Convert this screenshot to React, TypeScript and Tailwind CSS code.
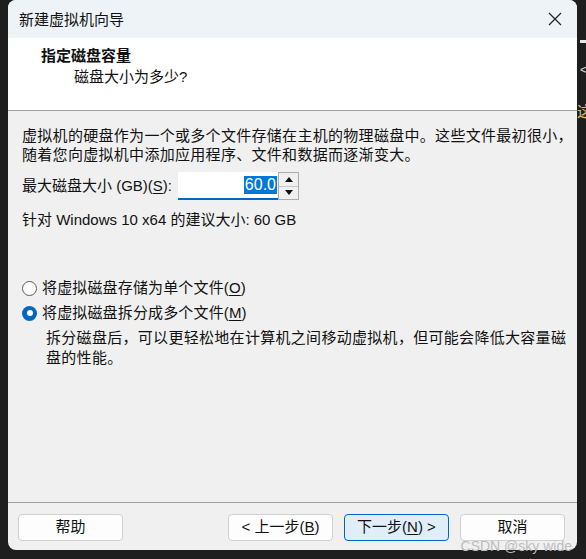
import React from "react";

const font = {
  fontFamily: '"Liberation Sans", "Noto Sans CJK SC", sans-serif',
};

function U({ children }: { children: React.ReactNode }) {
  return <span className="underline underline-offset-2 decoration-1">{children}</span>;
}

function Radio({ checked }: { checked: boolean }) {
  return checked ? (
    <span className="flex h-[15px] w-[15px] shrink-0 items-center justify-center rounded-full bg-[#0067c0]">
      <span className="h-[6px] w-[6px] rounded-full bg-white" />
    </span>
  ) : (
    <span className="h-[15px] w-[15px] shrink-0 rounded-full border border-[#5a5a5a] bg-white" />
  );
}

function Btn({ children, primary }: { children: React.ReactNode; primary?: boolean }) {
  return (
    <div
      className={
        "flex h-[27px] w-[105px] items-center justify-center rounded-[4px] border text-[15px] " +
        (primary ? "border-[#0067c0] bg-[#e0eef9]" : "border-[#d0d0d0] bg-[#fdfdfd]")
      }
    >
      {children}
    </div>
  );
}

export default function App() {
  return (
    <div
      className="relative flex h-[559px] w-[586px] overflow-hidden bg-[#1e1e1e] text-[#111]"
      style={font}
    >
      <div className="w-[8px] shrink-0" />
      <div className="flex h-[550px] w-[569px] shrink-0 flex-col overflow-hidden rounded-[8px] bg-[#f0f0f0]">
        {/* title bar */}
        <div className="flex h-[38px] shrink-0 items-center justify-between bg-[#eef3f8] pl-[11px] pr-[14px]">
          <span className="text-[15px] leading-none">新建虚拟机向导</span>
          <svg width="14" height="14" viewBox="0 0 14 14" className="mr-[1px]">
            <path d="M1 1 L13 13 M13 1 L1 13" stroke="#222" strokeWidth="1.2" />
          </svg>
        </div>
        {/* header */}
        <div className="flex h-[72px] shrink-0 flex-col bg-white pl-[33px] pt-[8px]">
          <div className="text-[15px] font-bold leading-[20px]">指定磁盘容量</div>
          <div className="mt-[1px] pl-[33px] text-[15px] leading-[20px]">磁盘大小为多少?</div>
        </div>
        <div className="h-px shrink-0 bg-[#a0a0a0]" />
        {/* body */}
        <div className="flex flex-1 flex-col pl-[14px] pt-[15px] text-[15px]">
          <div className="leading-[19px] tracking-[0.3px]">
            <div>虚拟机的硬盘作为一个或多个文件存储在主机的物理磁盘中。这些文件最初很小，</div>
            <div>随着您向虚拟机中添加应用程序、文件和数据而逐渐变大。</div>
          </div>
          <div className="mt-[8px] flex h-[28px] items-center">
            <span>
              最大磁盘大小 (GB)(<U>S</U>):
            </span>
            <div className="ml-auto mr-[278px] flex h-[28px]">
              <div className="flex h-[28px] w-[100px] items-center justify-end border-b-2 border-[#0067c0] bg-white pr-[1px]">
                <span className="bg-[#0078d7] px-[1px] text-[16px] leading-[18px] text-white">60.0</span>
              </div>
              <div className="flex h-[28px] w-[21px] flex-col border border-[#adadad] bg-[#e5e5e5]">
                <div className="flex flex-1 items-center justify-center border-b border-[#c8c8c8] bg-[#f0f0f0]">
                  <svg width="8" height="5" viewBox="0 0 8 5">
                    <path d="M0 5 L4 0 L8 5 Z" fill="#111" />
                  </svg>
                </div>
                <div className="flex flex-1 items-center justify-center bg-[#f0f0f0]">
                  <svg width="8" height="5" viewBox="0 0 8 5">
                    <path d="M0 0 L8 0 L4 5 Z" fill="#111" />
                  </svg>
                </div>
              </div>
            </div>
          </div>
          <div className="mt-[10px] leading-[19px]">
            针对 Windows 10 x64 的建议大小: 60 GB
          </div>
          <div className="mt-[49px] flex h-[20px] items-center gap-[5px] pl-[-0px]">
            <Radio checked={false} />
            <span className="tracking-[0.15px]">
              将虚拟磁盘存储为单个文件(<U>O</U>)
            </span>
          </div>
          <div className="mt-[5px] flex h-[20px] items-center gap-[5px]">
            <Radio checked={true} />
            <span className="tracking-[0.15px]">
              将虚拟磁盘拆分成多个文件(<U>M</U>)
            </span>
          </div>
          <div className="mt-[5px] pl-[24px] pr-[8px] leading-[20px] tracking-[0.3px]">
            拆分磁盘后，可以更轻松地在计算机之间移动虚拟机，但可能会降低大容量磁盘的性能。
          </div>
          <div className="flex-1" />
        </div>
        <div className="h-px shrink-0 bg-[#a0a0a0]" />
        <div className="flex h-[47px] shrink-0 items-start pl-[10px] pt-[11px]">
          <Btn>帮助</Btn>
          <div className="ml-[105px] flex gap-[11px]">
            <Btn>
              &lt; 上一步(<U>B</U>)
            </Btn>
            <Btn primary>
              下一步(<U>N</U>) &gt;
            </Btn>
            <Btn>取消</Btn>
          </div>
        </div>
      </div>
      {/* background fragments on the right */}
      <div className="relative flex-1">
        <div className="absolute left-[3px] top-[40px] h-[3px] w-[6px] bg-[#e8e8e8]" />
        <div className="absolute left-[3px] top-[64px] text-[12px] leading-none text-[#ddd]">&lt;</div>
        <div className="absolute left-[0px] top-[104px] text-[15px] leading-none text-[#e0c070]">这</div>
      </div>
      <div
        className="absolute bottom-[6px] right-[14px] text-[14px] leading-none text-[#bdbdbd]"
        style={{ fontFamily: '"Liberation Sans", sans-serif' }}
      >
        CSDN @sky wide
      </div>
    </div>
  );
}
